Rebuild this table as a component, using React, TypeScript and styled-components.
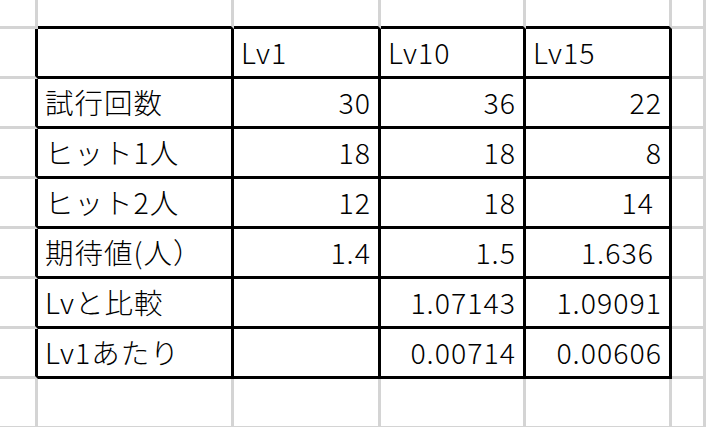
import React from "react";
import styled, { createGlobalStyle } from "styled-components";

const GlobalStyle = createGlobalStyle`
  html, body {
    margin: 0;
    padding: 0;
    background: #ffffff;
    overflow: hidden;
  }
`;

const GRID = "#d4d4d4";
const INK = "#000000";

const Sheet = styled.div`
  display: grid;
  grid-template-columns: 38px 196px 147px 145px 146px 1fr;
  grid-template-rows: 29px repeat(8, 50px);
  width: 706px;
  height: 427px;
  overflow: hidden;
  background: #ffffff;
  font-family: "Noto Sans CJK JP", "Noto Sans", sans-serif;
  font-size: 28.5px;
  font-weight: 300;
  letter-spacing: 1px;
  color: #000000;
`;

const Cell = styled.div<{
  $right: boolean;
  $bottom: boolean;
  $num?: boolean;
  $extra?: boolean;
}>`
  box-sizing: border-box;
  display: flex;
  align-items: center;
  justify-content: ${(p) => (p.$num ? "flex-end" : "flex-start")};
  padding: 0 ${(p) => (p.$extra ? "15px" : "7px")} 1px
    ${(p) => (p.$num ? "0" : "7px")};
  border-right: 3px solid ${(p) => (p.$right ? INK : GRID)};
  border-bottom: 3px solid ${(p) => (p.$bottom ? INK : GRID)};
  line-height: 1;
  white-space: nowrap;
  overflow: hidden;
`;

type Val = { text: string; extra?: boolean };

const header = ["", "Lv1", "Lv10", "Lv15"];

const rows: { label: string; values: Val[] }[] = [
  { label: "試行回数", values: [{ text: "30" }, { text: "36" }, { text: "22" }] },
  { label: "ヒット1人", values: [{ text: "18" }, { text: "18" }, { text: "8" }] },
  {
    label: "ヒット2人",
    values: [{ text: "12" }, { text: "18" }, { text: "14", extra: true }],
  },
  {
    label: "期待値(人）",
    values: [{ text: "1.4" }, { text: "1.5" }, { text: "1.636", extra: true }],
  },
  { label: "Lvと比較", values: [{ text: "" }, { text: "1.07143" }, { text: "1.09091" }] },
  { label: "Lv1あたり", values: [{ text: "" }, { text: "0.00714" }, { text: "0.00606" }] },
];

const ROWS = 9;
const COLS = 6;

const inTable = (r: number, c: number) => r >= 1 && r <= 7 && c >= 1 && c <= 4;

const App = () => {
  const contentAt = (r: number, c: number): { text: string; num: boolean; extra?: boolean } => {
    if (!inTable(r, c)) return { text: "", num: false };
    if (r === 1) return { text: header[c - 1], num: false };
    const row = rows[r - 2];
    if (c === 1) return { text: row.label, num: false };
    const v = row.values[c - 2];
    return { text: v.text, num: true, extra: v.extra };
  };

  const cells = [];
  for (let r = 0; r < ROWS; r++) {
    for (let c = 0; c < COLS; c++) {
      const content = contentAt(r, c);
      cells.push(
        <Cell
          key={`${r}-${c}`}
          $right={inTable(r, c) || inTable(r, c + 1)}
          $bottom={inTable(r, c) || inTable(r + 1, c)}
          $num={content.num}
          $extra={content.extra}
        >
          {content.text}
        </Cell>
      );
    }
  }

  return (
    <>
      <GlobalStyle />
      <Sheet>{cells}</Sheet>
    </>
  );
};

export default App;
